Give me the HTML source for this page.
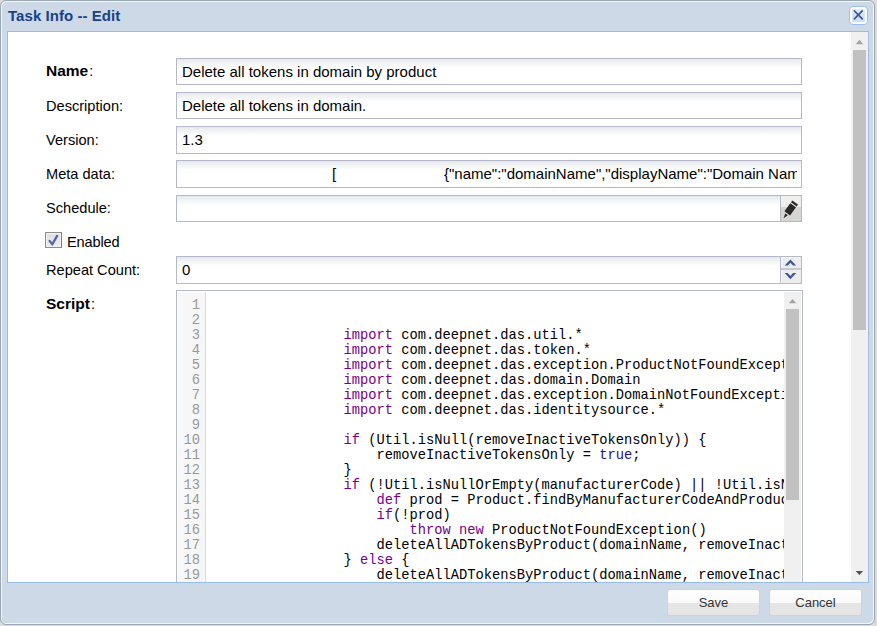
<!DOCTYPE html>
<html><head><meta charset="utf-8">
<style>
*{margin:0;padding:0;box-sizing:border-box}
html,body{width:877px;height:626px;overflow:hidden;background:#dcdcdc}
body{position:relative;font-family:"Liberation Sans",sans-serif}
.abs{position:absolute}
#win{left:0;top:0;width:875px;height:625px;background:#ced9e7;border:1px solid #99a6b8;border-radius:6px;box-shadow:inset 1px 1px 0 #f4f7fb,inset -1px -1px 0 #f4f7fb}
#title{left:8px;top:6px;font-weight:bold;font-size:15px;color:#15428b;line-height:20px;letter-spacing:0.05px}
#close{left:849px;top:6px;width:19px;height:19px;border:1px solid #9cc0ee;border-radius:4px;background:#fff}
#close .in{position:absolute;left:2px;top:2px;width:13px;height:13px;background:linear-gradient(#e3eefc,#d2e3f9 50%,#cfe1f8)}
#body{left:7px;top:31px;width:862px;height:552px;background:#fff;border:1px solid #99bbe8}
#clip{left:8px;top:32px;width:860px;height:550px;overflow:hidden}
#cont{left:-8px;top:-32px;width:877px;height:626px}
.lbl{position:absolute;left:46px;font-size:14.6px;color:#000;line-height:17px;white-space:nowrap}
.lbl b{font-size:15.5px;margin-right:1px}
.fld{position:absolute;left:176px;width:626px;height:27px;border:1px solid #b5b8c8;background:#fff linear-gradient(#e6e9ec,#fff 9px);font-size:15px;color:#000;white-space:nowrap;overflow:hidden}
.fld span{position:absolute;top:0;line-height:25px}
.sb{position:absolute;background:#f0f0f0}
.trig{position:absolute;left:780px;width:22px;border:1px solid #b5b8c8;border-left:1px solid #b5b8c8;background:linear-gradient(#f1f1ef 0,#ededeb 11px,#d5d5d1 11px,#d5d5d1 100%);overflow:hidden;border-radius:0 2px 2px 0}
.spin{background:#ededed;box-shadow:inset 1px 1px 0 #f8f8f8}
.thumb{position:absolute;background:#c1c1c1}
.btn{position:absolute;top:589px;width:93px;height:27px;border:1px solid #d2d2d2;border-radius:3px;background:linear-gradient(#fff 0,#fafafa 13px,#e5e5e5 13px,#e5e5e5 100%);font-size:13px;color:#333;text-align:center;line-height:26px}
#cm{left:176px;top:290px;width:627px;height:330px;border:1px solid #b5b8c8;background:#fff;overflow:hidden}
#gut{position:absolute;left:1px;top:1px;width:28px;height:400px;background:#f7f7f7;border-right:1px solid #ddd}
#nums{position:absolute;right:5px;top:6px;text-align:right;color:#999;font-family:"Liberation Mono",monospace;font-size:13.75px;line-height:15px;white-space:pre}
#code{position:absolute;left:34.5px;top:7px;width:572px;height:400px;overflow:hidden;font-family:"Liberation Mono",monospace;font-size:13.75px;line-height:15px;white-space:pre;color:#000}
.k{color:#708}.a{color:#219}
</style></head><body>
<div id="win" class="abs"></div>
<div id="title" class="abs">Task Info -- Edit</div>
<div id="close" class="abs"><div class="in"></div>
<svg class="abs" style="left:-1px;top:-1px" width="19" height="19" viewBox="849 6 19 19"><path d="M853.9 10.4L862.7 19.4M862.7 10.4L853.9 19.4" stroke="#3f52a2" stroke-width="1.65"/></svg></div>
<div id="body" class="abs"></div>
<div id="clip" class="abs"><div id="cont" class="abs">
<div class="lbl" style="top:62px"><b>Name</b>:</div>
<div class="lbl" style="top:98px">Description:</div>
<div class="lbl" style="top:132px">Version:</div>
<div class="lbl" style="top:166px">Meta data:</div>
<div class="lbl" style="top:200px">Schedule:</div>
<div class="lbl" style="top:234px;left:67px;letter-spacing:-0.15px">Enabled</div>
<div class="lbl" style="top:262px">Repeat Count:</div>
<div class="lbl" style="top:295px"><b>Script</b>:</div>
<div class="abs" style="left:45px;top:232px;width:17px;height:16px;border:1px solid #8c8d8e;border-right-color:#5a87a6;background:linear-gradient(#e0e0e0,#ececec);box-shadow:inset 0 0 0 1px #f2f2f2">
<svg class="abs" style="left:-1px;top:-1px" width="17" height="16" viewBox="45 232 17 16"><path d="M49.6 240.9L52.3 244.3L57.1 235.9" stroke="#4f66ad" stroke-width="2.3" stroke-linecap="round" stroke-linejoin="round" fill="none"/></svg></div>
<div class="fld" style="top:58px"><span style="left:5px">Delete all tokens in domain by product</span></div>
<div class="fld" style="top:92px"><span style="left:5px">Delete all tokens in domain.</span></div>
<div class="fld" style="top:126px;height:28px"><span style="left:5px">1.3</span></div>
<div class="fld" style="top:160px;height:28px"><span style="left:155px">[</span><span style="left:267px;right:4px;overflow:hidden">{"name":"domainName","displayName":"Domain Name"}</span></div>
<div class="fld" style="top:195px"></div>
<div class="fld" style="top:256px;height:28px"><span style="left:5px">0</span></div>
<div class="trig" style="top:195px;height:27px"><svg class="abs" style="left:-1px;top:-1px" width="21" height="26" viewBox="780 195 21 26"><g transform="translate(790.2 209.3) rotate(36)"><rect x="-3.5" y="-5" width="7" height="10" fill="#2d2627"/><rect x="-3.5" y="-8.4" width="7" height="2.3" fill="#2d2627"/><path d="M-1.6 6.3L1.6 6.3L0 11.2Z" fill="#2d2627"/></g></svg></div>
<div class="trig spin" style="top:256px;height:28px"><div class="abs" style="left:0;top:11.3px;width:21px;height:1.6px;background:#c6c8d4"></div><svg class="abs" style="left:-1px;top:-1px" width="21" height="27" viewBox="780 256 21 27"><path d="M790.4 259.4L796.1 265.6L793.1 265.6L790.4 262.7L787.7 265.6L784.7 265.6Z" fill="#3a5597"/><path d="M784.7 273.1L787.7 273.1L790.4 276L793.1 273.1L796.1 273.1L790.4 279.3Z" fill="#3a5597"/></svg></div>
<div id="cm" class="abs">
<div id="gut"><div id="nums">1
2
3
4
5
6
7
8
9
10
11
12
13
14
15
16
17
18
19
20</div></div>
<div id="code">

                <span class="k">import</span> com.deepnet.das.util.*
                <span class="k">import</span> com.deepnet.das.token.*
                <span class="k">import</span> com.deepnet.das.exception.ProductNotFoundException
                <span class="k">import</span> com.deepnet.das.domain.Domain
                <span class="k">import</span> com.deepnet.das.exception.DomainNotFoundException
                <span class="k">import</span> com.deepnet.das.identitysource.*

                <span class="k">if</span> (Util.isNull(removeInactiveTokensOnly)) {
                    removeInactiveTokensOnly = <span class="a">true</span>;
                }
                <span class="k">if</span> (!Util.isNullOrEmpty(manufacturerCode) || !Util.isNullOrEmpty(productCode)) {
                    <span class="k">def</span> prod = Product.findByManufacturerCodeAndProductCode(manufacturerCode, productCode)
                    <span class="k">if</span>(!prod)
                        <span class="k">throw</span> <span class="k">new</span> ProductNotFoundException()
                    deleteAllADTokensByProduct(domainName, removeInactiveTokensOnly, prod)
                } <span class="k">else</span> {
                    deleteAllADTokensByProduct(domainName, removeInactiveTokensOnly)
                }</div>
<div class="sb" style="left:607px;top:1px;width:17px;height:330px"></div>
<div class="thumb" style="left:609px;top:18px;width:13px;height:191px"></div>
<svg class="abs" style="left:607px;top:5px" width="17" height="10" viewBox="784 295 17 10"><path d="M788.8 302.3L792.5 298L796.2 302.3Z" fill="#a3a3a3"/></svg>
</div>
<div class="sb" style="left:851px;top:32px;width:17px;height:550px"></div>
<div class="thumb" style="left:853px;top:50px;width:13px;height:280px"></div>
<svg class="abs" style="left:851px;top:36px" width="17" height="12" viewBox="851 36 17 12"><path d="M855.8 44.2L859.5 39.8L863.2 44.2Z" fill="#a3a3a3"/></svg>
<svg class="abs" style="left:851px;top:568px" width="17" height="10" viewBox="851 568 17 10"><path d="M855.7 571L863.1 571L859.4 574.9Z" fill="#505050"/></svg>

</div></div>
<div class="btn" style="left:667px">Save</div>
<div class="btn" style="left:769px">Cancel</div>
</body></html>
